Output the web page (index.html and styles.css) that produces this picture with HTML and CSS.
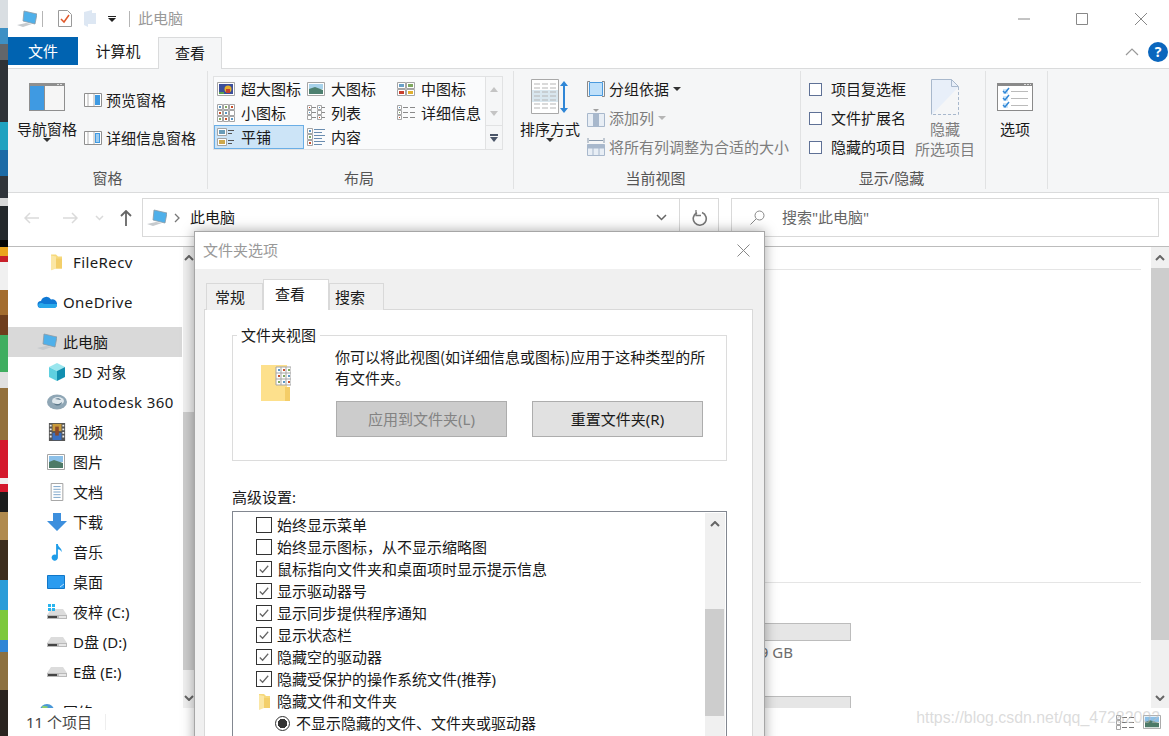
FILE: index.html
```html
<!DOCTYPE html>
<html lang="zh-CN">
<head>
  <meta charset="UTF-8">
  <title>此电脑</title>
  <link rel="stylesheet" href="styles.css">
</head>
<body>
  <!-- shared icons -->
  <svg class="defs" aria-hidden="true">
    <symbol id="pc" viewBox="0 0 20 18"><path d="M7 1l13 3-2 10-12-3z" fill="#4fb0ea" stroke="#8d9ba5" stroke-width=".8"/><path d="M0 15l9-2 6 1-9 3z" fill="#c6cacd"/></symbol>
    <symbol id="folder" viewBox="0 0 13 17"><path d="M1 1h5l2 2h4v12H1z" fill="#f6d97c"/><path d="M1 2v15l5-2V3z" fill="#fbe7a5"/><path d="M6 5h6v10H6z" fill="#f3cf6a"/></symbol>
    <symbol id="drive" viewBox="0 0 20 12"><path d="M4 1h12l4 6H0z" fill="#dcdcdc"/><path d="M0 7h20v4H0z" fill="#b9b9b9"/><path d="M1 8h9v2H1z" fill="#444"/><path d="M12 8h7v2h-7z" fill="#e6e6e6"/></symbol>
    <symbol id="chev-up" viewBox="0 0 10 6"><path d="M1 5l4-4 4 4" fill="none" stroke="#666" stroke-width="2"/></symbol>
    <symbol id="chev-down" viewBox="0 0 10 6"><path d="M1 1l4 4 4-4" fill="none" stroke="#666" stroke-width="2"/></symbol>
    <symbol id="tick" viewBox="0 0 15 15"><path d="M3 8l3 3 6-7" fill="none" stroke="#666" stroke-width="1.3"/></symbol>
    <symbol id="mini" viewBox="0 0 18 16"><path d="M.5.5h17v15H.5z" fill="#fff" stroke="#a5a5a5"/><path d="M2 2h14v6H2z" fill="#8cc0e8"/><path d="M2 8l5-2 9 3v5H2z" fill="#4d7a68"/></symbol>
  </svg>

  <div class="desktop">
    <div class="wallpaper-strip"></div>

    <div class="explorer">
      <header class="titlebar">
        <svg class="ico-pc"><use href="#pc"/></svg>
        <span class="tb-sep"></span>
        <svg class="tb-doc" viewBox="0 0 14 17"><path d="M.5.5h9l4 4v12H.5z" fill="#fff" stroke="#9a9a9a"/><path d="M3 9l3 3 5-7" fill="none" stroke="#e0582a" stroke-width="1.5"/></svg>
        <svg class="tb-folder" viewBox="0 0 12 17"><path d="M0 2l8-2v3h4v11H4v3l-4-2z" fill="#dde7f3"/></svg>
        <svg class="tb-drop" viewBox="0 0 8 6"><path d="M0 0h8v1H0zM0 2h8L4 6z" fill="#222"/></svg>
        <span class="tb-sep tb-sep-title"></span>
        <span class="tb-title">此电脑</span>
        <div class="win-buttons">
          <svg viewBox="0 0 12 12"><path d="M0 6h12" stroke="#888" fill="none"/></svg>
          <svg viewBox="0 0 12 12"><path d="M.5.5h11v11H.5z" stroke="#888" fill="none"/></svg>
          <svg viewBox="0 0 12 12"><path d="M0 0l12 12M12 0L0 12" stroke="#888" fill="none"/></svg>
        </div>
      </header>

      <nav class="tabs">
        <a class="tab tab-file">文件</a>
        <a class="tab tab-plain">计算机</a>
        <a class="tab tab-active">查看</a>
        <svg class="ribbon-toggle" viewBox="0 0 14 8"><path d="M1 7l6-6 6 6" fill="none" stroke="#999" stroke-width="1.2"/></svg>
        <span class="help">?</span>
      </nav>

      <section class="ribbon">
        <div class="group group-panes">
          <div class="group-body">
            <div class="large">
              <div class="large-icon">
                <svg width="36" height="28" viewBox="0 0 36 28"><path d="M0 0h36v28H0z" fill="#8f8f8f"/><path d="M1 3h14v24H1z" fill="#3f9ae2"/><path d="M16 3h19v24H16z" fill="#f6f6f6"/><path d="M28 1h2v1h-2zM31 1h2v1h-2z" fill="#ddd"/></svg>
              </div>
              <span class="large-label">导航窗格</span>
              <span class="caret"></span>
            </div>
            <div class="pane-col">
              <div class="row">
                <svg class="row-icon" viewBox="0 0 18 14"><path d="M.5.5h17v13H.5z" fill="#fff" stroke="#8f8f8f"/><path d="M4 1v12M10 1v12" stroke="#b5b5b5"/><path d="M11 2h5v10h-5z" fill="#3f9ae2"/></svg>
                <span>预览窗格</span>
              </div>
              <div class="row">
                <svg class="row-icon" viewBox="0 0 18 14"><path d="M.5.5h17v13H.5z" fill="#fff" stroke="#8f8f8f"/><path d="M4 1v12M10 1v12" stroke="#b5b5b5"/><path d="M11 2h5v10h-5z" fill="#3f9ae2"/><path d="M12 4h3M12 6h3M12 8h3M12 10h3" stroke="#fff"/></svg>
                <span>详细信息窗格</span>
              </div>
            </div>
          </div>
          <div class="group-label">窗格</div>
        </div>

        <div class="group group-layout">
          <div class="group-body">
            <div class="gallery">
              <div class="gallery-item">
                <svg class="row-icon" viewBox="0 0 18 14"><path d="M.5.5h17v13H.5z" fill="#fff" stroke="#a5a5a5"/><path d="M2 2h14v10H2z" fill="#3c4f9a"/><circle cx="11" cy="7" r="3.5" fill="#e8b02c"/><path d="M9 7h4v4H9z" fill="#c8402e"/><path d="M2 10h5v2H2z" fill="#5aa050"/></svg>
                <span>超大图标</span>
              </div>
              <div class="gallery-item">
                <svg class="row-icon" viewBox="0 0 18 14"><path d="M.5.5h17v13H.5z" fill="#fff" stroke="#a5a5a5"/><path d="M2 2h14v5H2z" fill="#a7d2ea"/><path d="M2 7l6-2 8 3v4H2z" fill="#4d8070"/></svg>
                <span>大图标</span>
              </div>
              <div class="gallery-item">
                <svg class="row-icon" viewBox="0 0 18 14"><path d="M.5.5h8v6h-8zM9.5.5h8v6h-8zM.5 7.5h8v6h-8zM9.5 7.5h8v6h-8z" fill="#fff" stroke="#a5a5a5"/><path d="M2 2h5v3H2z" fill="#6aa0c8"/><path d="M11 2h5v3h-5z" fill="#7fa860"/><path d="M2 9h5v3H2z" fill="#c8402e"/><path d="M11 9h5v3h-5z" fill="#e0b030"/></svg>
                <span>中图标</span>
              </div>
              <div class="gallery-item">
                <svg class="row-icon row-icon-tall" viewBox="0 0 18 18"><path d="M.5.5h5v5h-5zM6.5.5h5v5h-5zM12.5.5h5v5h-5zM.5 6.5h5v5h-5zM6.5 6.5h5v5h-5zM12.5 6.5h5v5h-5zM.5 12.5h5v5h-5zM6.5 12.5h5v5h-5zM12.5 12.5h5v5h-5z" fill="#fff" stroke="#a5a5a5"/><path d="M2 2h2v2H2zM8 8h2v2H8zM14 14h2v2h-2z" fill="#5a96c4"/><path d="M8 2h2v2H8zM2 14h2v2H2z" fill="#7fa860"/><path d="M14 2h2v2h-2zM8 14h2v2H8zM2 8h2v2H2z" fill="#c8502e"/></svg>
                <span>小图标</span>
              </div>
              <div class="gallery-item">
                <svg class="row-icon row-icon-tall" viewBox="0 0 18 16"><path d="M.5.5h4v4h-4zM.5 5.5h4v4h-4zM.5 10.5h4v4h-4zM10.5.5h4v4h-4zM10.5 5.5h4v4h-4zM10.5 10.5h4v4h-4z" fill="#fff" stroke="#a5a5a5"/><path d="M5 2.5h4M5 7.5h4M5 12.5h4M15 2.5h3M15 7.5h3M15 12.5h3" stroke="#8a8a8a"/><path d="M2 2h1v1H2zM12 12h1v1h-1z" fill="#c8502e"/><path d="M2 7h1v1H2zM12 2h1v1h-1z" fill="#5a96c4"/></svg>
                <span>列表</span>
              </div>
              <div class="gallery-item">
                <svg class="row-icon row-icon-tall" viewBox="0 0 18 16"><path d="M.5.5h4v4h-4zM.5 5.5h4v4h-4zM.5 10.5h4v4h-4z" fill="#fff" stroke="#a5a5a5"/><path d="M6 2.5h5M13 2.5h5M6 7.5h5M13 7.5h5M6 12.5h5M13 12.5h5" stroke="#8a8a8a"/><path d="M2 2h1v1H2z" fill="#5a96c4"/><path d="M2 7h1v1H2z" fill="#7fa860"/><path d="M2 12h1v1H2z" fill="#c8502e"/></svg>
                <span>详细信息</span>
              </div>
              <div class="gallery-item gallery-selected">
                <svg class="row-icon row-icon-tall" viewBox="0 0 18 18"><path d="M.5.5h9v7h-9zM.5 10.5h9v7h-9z" fill="#fff" stroke="#a5a5a5"/><path d="M2 2h6v4H2z" fill="#6a9cb8"/><path d="M2 12h6v4H2z" fill="#cfa84a"/><path d="M11 2.5h6M11 5.5h4M11 12.5h6M11 15.5h4" stroke="#555"/></svg>
                <span>平铺</span>
              </div>
              <div class="gallery-item">
                <svg class="row-icon row-icon-tall" viewBox="0 0 18 18"><path d="M.5.5h5v5h-5zM.5 6.5h5v5h-5zM.5 12.5h5v5h-5z" fill="#fff" stroke="#a5a5a5"/><path d="M7 1.5h11M7 4.5h8M7 7.5h11M7 10.5h8M7 13.5h11M7 16.5h8" stroke="#6a8db0"/><path d="M2 2h2v2H2z" fill="#5a96c4"/><path d="M2 8h2v2H2z" fill="#7fa860"/><path d="M2 14h2v2H2z" fill="#c8502e"/></svg>
                <span>内容</span>
              </div>
            </div>
            <div class="gallery-scroll">
              <div class="gs-top">
                <span class="tri-up"></span>
                <span class="tri-down"></span>
              </div>
              <div class="gs-more">
                <span class="gs-bar"></span>
                <span class="tri-down tri-dark"></span>
              </div>
            </div>
          </div>
          <div class="group-label">布局</div>
        </div>

        <div class="group group-view">
          <div class="group-body">
            <div class="large">
              <div class="large-icon">
                <svg width="38" height="36" viewBox="0 0 38 36"><path d="M.5.5h27v34H.5z" fill="#fff" stroke="#a9a9a9"/><path d="M1 11h26v12H1z" fill="#d9e7ef"/><path d="M3 5h6M11 5h6M19 5h6M3 9h6M11 9h6M19 9h6M3 13h6M11 13h6M19 13h6M3 17h6M11 17h6M19 17h6M3 21h6M11 21h6M19 21h6M3 25h6M11 25h6M19 25h6M3 29h6M11 29h6M19 29h6" stroke="#b5b5b5"/><path d="M33 2l-4 5h3v22h-3l4 5 4-5h-3V7h3z" fill="#2f86d6"/></svg>
              </div>
              <span class="large-label">排序方式</span>
              <span class="caret"></span>
            </div>
            <div class="option-col">
              <div class="row">
                <svg class="row-icon row-icon-tall" viewBox="0 0 18 16"><path d="M3 .5H.5v15H3M15 .5h2.500v15H15" fill="none" stroke="#8a8a8a"/><path d="M2.500 1.500h13v13h-13z" fill="#bfe0fa" stroke="#4a9ade"/></svg>
                <span>分组依据</span>
                <span class="caret caret-side"></span>
              </div>
              <div class="row row-off">
                <svg class="row-icon row-icon-tall" viewBox="0 0 18 18"><path d="M.5 4.500h17v13H.5z" fill="#e8eef5" stroke="#a8b8cc"/><path d="M6 5h6v12H6z" fill="#a8b8cc"/><path d="M6 0h6l-3 3z" fill="#a0a0a0"/></svg>
                <span>添加列</span>
                <span class="caret caret-side caret-off"></span>
              </div>
              <div class="row row-off">
                <svg class="row-icon row-icon-tall" viewBox="0 0 18 18"><path d="M.5 6.500h17v11H.5z" fill="#e8eef5" stroke="#a8b8cc"/><path d="M.5 6.500h17v4H.5z" fill="#a8b8cc"/><path d="M6 10v8M12 10v8" stroke="#a8b8cc"/><path d="M1 0v5M17 0v5M2 2.500h14" stroke="#8a9aac"/></svg>
                <span>将所有列调整为合适的大小</span>
              </div>
            </div>
          </div>
          <div class="group-label">当前视图</div>
        </div>

        <div class="group group-show">
          <div class="group-body">
            <div class="option-col show-col">
              <label class="row"><span class="rb-check"></span><span>项目复选框</span></label>
              <label class="row"><span class="rb-check"></span><span>文件扩展名</span></label>
              <label class="row"><span class="rb-check"></span><span>隐藏的项目</span></label>
            </div>
            <div class="large large-off">
              <div class="large-icon">
                <svg width="28" height="36" viewBox="0 0 28 36"><path d="M.5.500h20l7 7v28H.5z" fill="#e8eff9"/><path d="M.5 35.500V.500h20l7 7M20.500.500v7h7" fill="none" stroke="#a8b8cc"/><path d="M27.500 8v27.500H1z" fill="#f5f6f7"/><path d="M27.500 8v27.500H1" fill="none" stroke="#a8b8cc" stroke-dasharray="3 2"/></svg>
              </div>
              <span class="large-label">隐藏</span>
              <span class="large-label">所选项目</span>
            </div>
          </div>
          <div class="group-label">显示/隐藏</div>
        </div>

        <div class="group group-options">
          <div class="group-body">
            <div class="large">
              <div class="large-icon">
                <svg width="36" height="28" viewBox="0 0 36 28"><path d="M0 0h36v28H0z" fill="#8a8a8a"/><path d="M1 3h34v24H1z" fill="#fff"/><path d="M27 1h2v1h-2zM30 1h2v1h-2zM33 1h1v1h-1z" fill="#ddd"/><path d="M6 6h5v5H6zM6 13h5v5H6zM6 20h5v5H6z" fill="#cfe6f8"/><path d="M6 8l2 2 4-5M6 15l2 2 4-5M6 22l2 2 4-5" fill="none" stroke="#2f86d6" stroke-width="1.5"/><path d="M14 8.500h17M14 15.500h17M14 22.500h17" stroke="#bbb"/></svg>
              </div>
              <span class="large-label">选项</span>
            </div>
          </div>
        </div>
      </section>

      <div class="addressbar">
        <svg class="nav-back" viewBox="0 0 15 12"><path d="M15 6H1M6 1L1 6l5 5" fill="none" stroke="#dadada" stroke-width="1.5"/></svg>
        <svg class="nav-forward" viewBox="0 0 15 12"><path d="M0 6h14M9 1l5 5-5 5" fill="none" stroke="#dadada" stroke-width="1.5"/></svg>
        <svg class="nav-recent" viewBox="0 0 9 6"><path d="M1 1l3.500 3.500L8 1" fill="none" stroke="#dadada" stroke-width="1.5"/></svg>
        <svg class="nav-up" viewBox="0 0 12 16"><path d="M6 16V1M1 6l5-5 5 5" fill="none" stroke="#666" stroke-width="1.8"/></svg>
        <div class="address">
          <svg class="ico-pc"><use href="#pc"/></svg>
          <svg class="crumb" viewBox="0 0 6 10"><path d="M1 1l4 4-4 4" fill="none" stroke="#777" stroke-width="1.3"/></svg>
          <span class="crumb-text">此电脑</span>
          <svg class="addr-drop" viewBox="0 0 11 7"><path d="M1 1l4.500 4.500L10 1" fill="none" stroke="#666" stroke-width="1.5"/></svg>
          <div class="refresh">
            <svg viewBox="0 0 16 16"><path d="M10 2.600A6.500 6.500 0 1 1 5 2.800" fill="none" stroke="#777" stroke-width="1.6"/><path d="M4 0v5.500h5" fill="none" stroke="#777" stroke-width="1.3"/></svg>
          </div>
        </div>
        <div class="search">
          <svg viewBox="0 0 15 15"><circle cx="9.500" cy="5.500" r="4.500" fill="none" stroke="#888"/><path d="M6 9l-5.500 5.500" stroke="#888"/></svg>
          <span>搜索&quot;此电脑&quot;</span>
        </div>
      </div>

      <div class="main">
        <aside class="nav-pane">
          <ul class="tree">
            <li class="tree-item child latin">
              <svg class="tree-icon" viewBox="0 0 20 17"><use href="#folder" x="3" width="13" height="17"/></svg>FileRecv
            </li>
            <li class="tree-item top spaced latin">
              <svg class="tree-icon" viewBox="0 0 20 14"><path d="M4 13a3.500 3.500 0 0 1 0-7 5.500 5.500 0 0 1 10-1.500A4.500 4.500 0 0 1 20 9a4 4 0 0 1-3 4z" fill="#0f78d4"/><path d="M4 13h13a3 3 0 0 0 3-4H7a4 4 0 0 0-6 1 3.500 3.500 0 0 0 3 3z" fill="#28a8ea"/></svg>OneDrive
            </li>
            <li class="tree-item top spaced selected">
              <svg class="tree-icon"><use href="#pc"/></svg>此电脑
            </li>
            <li class="tree-item child">
              <svg class="tree-icon" viewBox="0 0 20 18"><path d="M10 0l8 4-8 4-8-4z" fill="#9ae6ee"/><path d="M2 4l8 4v10l-8-4z" fill="#5fd0e0"/><path d="M18 4l-8 4v10l8-4z" fill="#128fb0"/></svg>3D 对象
            </li>
            <li class="tree-item child latin">
              <svg class="tree-icon" viewBox="0 0 20 16"><ellipse cx="10" cy="8" rx="10" ry="7.500" fill="#8fa6b5"/><ellipse cx="11" cy="7" rx="6" ry="4" fill="#dfe7ec"/><path d="M6 9c3 4 9 3 9-1-2 2-5 3-9 1zM8 5c2-1 5-1 6 1-2-.5-4-.5-6-1z" fill="#5f7a8c"/></svg>Autodesk 360
            </li>
            <li class="tree-item child">
              <svg class="tree-icon" viewBox="0 0 20 20"><path d="M1 0h18v20H1z" fill="#555"/><path d="M5 1h10v8H5z" fill="#c99a3a"/><path d="M5 11h10v8H5z" fill="#3a6fc0"/><path d="M8 4h4v10H8z" fill="#8a4a2a"/><path d="M2 2h2v2H2zM2 6h2v2H2zM2 10h2v2H2zM2 14h2v2H2zM16 2h2v2h-2zM16 6h2v2h-2zM16 10h2v2h-2zM16 14h2v2h-2z" fill="#eee"/></svg>视频
            </li>
            <li class="tree-item child">
              <svg class="tree-icon" viewBox="0 0 20 16"><use href="#mini" width="18" height="16"/></svg>图片
            </li>
            <li class="tree-item child">
              <svg class="tree-icon" viewBox="0 0 20 20"><path d="M3.500.5h13v19h-13z" fill="#fff" stroke="#9a9a9a"/><path d="M6 4h8M6 7h8M6 10h8M6 13h8M6 16h8" stroke="#6f9cc4"/></svg>文档
            </li>
            <li class="tree-item child">
              <svg class="tree-icon" viewBox="0 0 20 18"><path d="M6 0h8v8h6L10 18 0 8h6z" fill="#3d8fdd"/></svg>下载
            </li>
            <li class="tree-item child">
              <svg class="tree-icon" viewBox="0 0 20 20"><path d="M9 1h2c0 4 5 4 4 9-1-2-2-3-4-3v9a3.500 3.500 0 1 1-2-3z" fill="#1e9ce8"/></svg>音乐
            </li>
            <li class="tree-item child">
              <svg class="tree-icon" viewBox="0 0 20 14"><path d="M.5.500h17v13H.5z" fill="#2b9cf0" stroke="#1177c8"/><path d="M13 12l4-3" stroke="#bde0fa"/></svg>桌面
            </li>
            <li class="tree-item child">
              <svg class="tree-icon" viewBox="0 0 20 16"><use href="#drive" y="4" width="20" height="12"/><path d="M1 0h3v3H1zM5 0h3v3H5zM1 4h3v3H1zM5 4h3v3H5z" fill="#27b4ee"/></svg>夜梓 (C:)
            </li>
            <li class="tree-item child">
              <svg class="tree-icon" viewBox="0 0 20 12"><use href="#drive"/></svg>D盘 (D:)
            </li>
            <li class="tree-item child">
              <svg class="tree-icon" viewBox="0 0 20 12"><use href="#drive"/></svg>E盘 (E:)
            </li>
            <li class="tree-item top spaced">
              <svg class="tree-icon" viewBox="0 0 20 20"><circle cx="10" cy="9" r="8" fill="#4a98d8"/><path d="M5 3l6 1-2 5-5-1z" fill="#8ccf70"/></svg>网络
            </li>
          </ul>
        </aside>
        <div class="scrollbar nav-scroll">
          <div class="sb-arrow"><svg><use href="#chev-up"/></svg></div>
          <div class="nav-scroll-track"></div>
          <div class="sb-thumb nav-scroll-thumb"></div>
          <div class="sb-track"></div>
          <div class="sb-arrow"><svg><use href="#chev-down"/></svg></div>
        </div>

        <div class="content">
          <div class="content-head"></div>
          <div class="folders-section"></div>
          <div class="drives">
            <div class="drive-bar"></div>
            <div class="drive-caption">119 GB</div>
            <div class="drive-bar drive-bar-next"></div>
          </div>
        </div>
        <div class="scrollbar content-scroll">
          <div class="sb-arrow"><svg><use href="#chev-up"/></svg></div>
          <div class="sb-thumb content-scroll-thumb"></div>
          <div class="sb-track"></div>
          <div class="sb-arrow"><svg><use href="#chev-down"/></svg></div>
        </div>
      </div>

      <footer class="statusbar">
        <span class="status-text">11 个项目</span>
        <span class="status-sep"></span>
        <div class="view-toggle">
          <svg width="20" height="15" viewBox="0 0 18 15"><path d="M.5.500h4v4h-4zM.5 5.500h4v4h-4zM.5 10.500h4v4h-4z" fill="#fff" stroke="#a5a5a5"/><path d="M6 2.500h5M13 2.500h5M6 7.500h5M13 7.500h5M6 12.500h5M13 12.500h5" stroke="#777"/></svg>
          <svg width="18" height="14" viewBox="0 0 18 16" preserveAspectRatio="none"><use href="#mini"/></svg>
        </div>
      </footer>
    </div>

    <!-- Folder options dialog, floats above the explorer window -->
    <div class="dialog">
      <div class="dialog-title">
        <span>文件夹选项</span>
        <svg viewBox="0 0 13 13"><path d="M.5.500l12 12M12.500.500l-12 12" stroke="#888" fill="none"/></svg>
      </div>
      <div class="dialog-body">
        <div class="dialog-tabs">
          <span class="dtab dtab-general">常规</span>
          <span class="dtab dtab-active">查看</span>
          <span class="dtab dtab-search">搜索</span>
        </div>
        <div class="dialog-panel">
          <fieldset class="folder-views">
            <legend>文件夹视图</legend>
            <div class="fv-icon">
              <svg width="30" height="37" viewBox="0 0 30 37"><path d="M0 1h26v36H0z" fill="#fde08c"/><path d="M24 23h5v14h-5z" fill="#f4cd68"/><path d="M15 3h15v18H15z" fill="#fff" stroke="#a5a5a5"/><path d="M15 9h15M15 15h15M20 3v18M25 3v18" stroke="#a5a5a5"/><path d="M17 5h2v2h-2zM27 11h2v2h-2zM22 17h2v2h-2z" fill="#5a96c4"/><path d="M22 5h2v2h-2zM17 11h2v2h-2zM27 17h2v2h-2z" fill="#c8502e"/><path d="M27 5h2v2h-2zM22 11h2v2h-2zM17 17h2v2h-2z" fill="#7fa860"/></svg>
            </div>
            <div class="fv-right">
              <p class="fv-text">你可以将此视图(如详细信息或图标)应用于这种类型的所有文件夹。</p>
              <div class="fv-buttons">
                <button class="btn btn-off" disabled>应用到文件夹(L)</button>
                <button class="btn">重置文件夹(R)</button>
              </div>
            </div>
          </fieldset>

          <div class="advanced-label">高级设置:</div>
          <div class="advanced-list">
            <ul class="settings">
              <li class="setting"><span class="box"></span>始终显示菜单</li>
              <li class="setting"><span class="box"></span>始终显示图标，从不显示缩略图</li>
              <li class="setting"><span class="box"><svg><use href="#tick"/></svg></span>鼠标指向文件夹和桌面项时显示提示信息</li>
              <li class="setting"><span class="box"><svg><use href="#tick"/></svg></span>显示驱动器号</li>
              <li class="setting"><span class="box"><svg><use href="#tick"/></svg></span>显示同步提供程序通知</li>
              <li class="setting"><span class="box"><svg><use href="#tick"/></svg></span>显示状态栏</li>
              <li class="setting"><span class="box"><svg><use href="#tick"/></svg></span>隐藏空的驱动器</li>
              <li class="setting"><span class="box"><svg><use href="#tick"/></svg></span>隐藏受保护的操作系统文件(推荐)</li>
              <li class="setting"><svg class="setting-folder"><use href="#folder"/></svg>隐藏文件和文件夹</li>
              <li class="setting setting-radio"><span class="radio"></span>不显示隐藏的文件、文件夹或驱动器</li>
            </ul>
            <div class="scrollbar list-scroll">
              <div class="sb-arrow"><svg><use href="#chev-up"/></svg></div>
              <div class="list-scroll-track"></div>
              <div class="sb-thumb list-scroll-thumb"></div>
              <div class="sb-track"></div>
            </div>
          </div>
        </div>
      </div>
    </div>

    <div class="watermark">https://blog.csdn.net/qq_47282002</div>
  </div>
</body>
</html>
```

FILE: styles.css
```css
/* General Styles */
html, body {
  margin: 0;
  height: 100%;
  overflow: hidden;
}

body {
  font-family: "Noto Sans", "Noto Sans CJK SC", sans-serif;
  font-size: 15px;
  line-height: 20px;
  color: #1a1a1a;
  background-color: #fff;
}

ul {
  list-style: none;
  margin: 0;
  padding: 0;
}

svg {
  display: block;
  flex: none;
}

.defs {
  width: 0;
  height: 0;
  position: absolute;
}

.desktop {
  position: relative;
  display: flex;
  width: 1169px;
  height: 736px;
  overflow: hidden;
}

.wallpaper-strip {
  width: 8px;
  flex: none;
  background: linear-gradient(180deg,
    #d9dee2 0 28px, #3d90c4 28px 44px, #62666a 44px 60px, #2e3237 60px 122px,
    #1fa2c0 122px 150px, #1b6aa6 150px 176px, #30343a 176px 198px, #d8d8d8 198px 206px,
    #24282c 206px 240px, #050505 240px 247px, #eaa41e 247px 256px, #c8202a 256px 262px,
    #f0f0f0 262px 290px, #a36c2e 290px 315px, #6e3d1c 315px 335px, #3fae60 335px 372px,
    #e0e0e0 372px 388px, #93703c 388px 440px, #d4182c 440px 478px, #f0f0f0 478px 484px,
    #d4182c 484px 492px, #1c1c1c 492px 512px, #b08a4e 512px 540px, #3c2d1e 540px 580px,
    #2a9cd8 580px 610px, #7cc83c 610px 640px, #2f86d6 640px 652px, #8c7040 652px 690px,
    #2a2420 690px 736px);
}

.explorer {
  flex: 1;
  display: flex;
  flex-direction: column;
  min-width: 0;
  background-color: #fff;
}

/* Title bar */
.titlebar {
  height: 37px;
  flex: none;
  display: flex;
  align-items: center;
  padding-left: 9px;
}

.ico-pc {
  width: 20px;
  height: 18px;
}

.tb-sep {
  width: 1px;
  height: 16px;
  margin-left: 5px;
  background-color: #b5b5b5;
}

.tb-doc {
  width: 14px;
  height: 17px;
  margin-left: 15px;
}

.tb-folder {
  width: 12px;
  height: 17px;
  margin-left: 12px;
}

.tb-drop {
  width: 8px;
  height: 6px;
  margin-left: 12px;
}

.tb-sep-title {
  margin-left: 13px;
}

.tb-title {
  margin: 0 0 2px 8px;
  color: #999;
}

.win-buttons {
  margin-left: auto;
  margin-right: 22px;
  display: flex;
  gap: 46px;
}

.win-buttons svg {
  width: 12px;
  height: 12px;
}

.win-buttons svg:last-child {
  margin-left: 1px;
}

/* Ribbon tabs */
.tabs {
  height: 32px;
  flex: none;
  box-sizing: border-box;
  display: flex;
  align-items: flex-start;
  border-bottom: 1px solid #dadbdc;
}

.tab {
  height: 28px;
  line-height: 29px;
  text-align: center;
}

.tab-file {
  width: 70px;
  background-color: #0063b1;
  color: #fff;
}

.tab-plain {
  width: 80px;
}

.tab-active {
  width: 64px;
  height: 32px;
  line-height: 30px;
  box-sizing: border-box;
  background-color: #f5f6f7;
  border: 1px solid #dadbdc;
  border-bottom: none;
}

.ribbon-toggle {
  width: 14px;
  height: 8px;
  margin: 11px 0 0 auto;
}

.help {
  width: 20px;
  height: 20px;
  margin: 5px 1px 0 9px;
  border-radius: 50%;
  background-color: #0a66bd;
  color: #fff;
  font-weight: 700;
  font-size: 14px;
  text-align: center;
}

/* Ribbon */
.ribbon {
  height: 124px;
  flex: none;
  box-sizing: border-box;
  display: flex;
  align-items: flex-start;
  padding-top: 2px;
  background-color: #f5f6f7;
  border-bottom: 1px solid #dadbdc;
}

.group {
  height: 118px;
  box-sizing: border-box;
  display: flex;
  flex-direction: column;
  border-right: 1px solid #e1e2e3;
}

.group-panes { width: 200px; }
.group-layout { width: 306px; }
.group-view { width: 287px; }
.group-show { width: 185px; }
.group-options { width: 62px; }

.group-body {
  height: 97px;
  display: flex;
}

.group-label {
  height: 21px;
  line-height: 21px;
  padding-right: 3px;
  text-align: center;
  color: #555;
}

.group-panes .group-label {
  padding-right: 0;
}

.large {
  width: 60px;
  flex: none;
  display: flex;
  flex-direction: column;
  align-items: center;
  padding-top: 7px;
}

.large-icon {
  height: 38px;
  display: flex;
  align-items: center;
  justify-content: center;
  margin-bottom: 3px;
}

.large-label {
  white-space: nowrap;
}

.large-off .large-label {
  color: #7d7d7d;
}

.caret {
  width: 0;
  height: 0;
  margin-top: -1px;
  border-left: 4px solid transparent;
  border-right: 4px solid transparent;
  border-top: 4px solid #333;
}

.row {
  height: 24px;
  display: flex;
  align-items: center;
  white-space: nowrap;
}

.row > span {
  margin-bottom: 1px;
}

.row > .rb-check {
  margin-bottom: 0;
}

.row > .caret-side {
  margin-top: 0;
  margin-left: 4px;
}

.caret-off {
  border-top-color: #b5b5b5;
}

.row-icon {
  width: 18px;
  height: 14px;
  margin-right: 4px;
}

.row-icon-tall {
  height: 18px;
}

.row-off {
  color: #7d7d7d;
}

.group-panes .large {
  margin-left: 9px;
}

.pane-col {
  margin-left: 7px;
  padding-top: 17px;
  display: flex;
  flex-direction: column;
  gap: 14px;
}

.group-layout .group-body {
  padding: 5px 0 0 5px;
}

.gallery {
  width: 273px;
  height: 74px;
  box-sizing: border-box;
  display: grid;
  grid-template-columns: repeat(3, 90px);
  grid-auto-rows: 24px;
  background-color: #fafbfc;
  border: 1px solid #e1e2e3;
}

.gallery-item {
  display: flex;
  align-items: center;
  box-sizing: border-box;
  padding-left: 3px;
  white-space: nowrap;
}

.gallery-item span {
  margin-bottom: 1px;
}

.gallery-item .row-icon {
  margin-right: 6px;
}

.gallery-selected {
  background-color: #cce4f7;
  box-shadow: inset 0 0 0 1px #6aaee6;
}

.gallery-scroll {
  width: 17px;
  height: 74px;
  display: flex;
  flex-direction: column;
  box-sizing: border-box;
  border: 1px solid #e1e2e3;
  border-left: none;
}

.gs-top {
  height: 49px;
  display: flex;
  flex-direction: column;
  align-items: center;
  gap: 19px;
  padding-top: 10px;
  box-sizing: border-box;
}

.gs-more {
  height: 23px;
  display: flex;
  flex-direction: column;
  align-items: center;
  justify-content: center;
  gap: 1px;
  border-top: 1px solid #e1e2e3;
}

.gs-bar {
  width: 8px;
  height: 2px;
  background-color: #4a5568;
}

.tri-up,
.tri-down {
  width: 0;
  height: 0;
  border-left: 4px solid transparent;
  border-right: 4px solid transparent;
}

.tri-up {
  border-bottom: 5px solid #c4c4c4;
}

.tri-down {
  border-top: 5px solid #c4c4c4;
}

.tri-dark {
  border-top-color: #4a5568;
}

.group-view .large {
  margin-left: 6px;
}

.option-col {
  margin-left: 7px;
  padding-top: 6px;
  display: flex;
  flex-direction: column;
  gap: 5px;
}

.show-col {
  margin-left: 8px;
  width: 97px;
}

.rb-check {
  width: 13px;
  height: 13px;
  margin-right: 9px;
  box-sizing: border-box;
  background-color: #fff;
  border: 1px solid #5f7196;
}

.group-show .large {
  margin-left: 9px;
}

.group-options .large {
  margin-left: -1px;
}

/* Address bar */
.addressbar {
  height: 54px;
  flex: none;
  box-sizing: border-box;
  display: flex;
  align-items: flex-start;
  padding: 5px 0 0 16px;
  border-bottom: 1px solid #bcbcbc;
}

.nav-back,
.nav-forward {
  width: 15px;
  height: 12px;
  margin-top: 14px;
}

.nav-forward {
  margin-left: 24px;
}

.nav-recent {
  width: 9px;
  height: 6px;
  margin: 17px 0 0 17px;
}

.nav-up {
  width: 12px;
  height: 16px;
  margin: 12px 0 0 16px;
}

.address {
  width: 577px;
  height: 39px;
  box-sizing: border-box;
  margin-left: 10px;
  padding-left: 4px;
  display: flex;
  align-items: center;
  border: 1px solid #d9d9d9;
}

.crumb {
  width: 6px;
  height: 10px;
  margin-left: 7px;
}

.crumb-text {
  margin: 0 0 2px 10px;
}

.addr-drop {
  width: 11px;
  height: 7px;
  margin-left: auto;
  margin-right: 12px;
}

.refresh {
  width: 39px;
  height: 100%;
  box-sizing: border-box;
  padding-left: 2px;
  display: flex;
  align-items: center;
  justify-content: center;
  border-left: 1px solid #d9d9d9;
}

.refresh svg {
  width: 16px;
  height: 16px;
}

.search {
  width: 428px;
  height: 39px;
  box-sizing: border-box;
  margin-left: 12px;
  padding-left: 18px;
  display: flex;
  align-items: center;
  gap: 17px;
  color: #666;
  border: 1px solid #d9d9d9;
}

.search span {
  margin-bottom: 2px;
}

.search svg {
  width: 15px;
  height: 15px;
}

/* Navigation tree and content */
.main {
  flex: 1;
  min-height: 0;
  display: flex;
  overflow: hidden;
}

.nav-pane {
  width: 175px;
  flex: none;
  overflow: hidden;
}

.tree-item {
  height: 30px;
  display: flex;
  align-items: center;
  gap: 6px;
  white-space: nowrap;
}

.tree-item.child {
  padding-left: 39px;
}

.tree-item.top {
  padding-left: 29px;
}

.tree-item.spaced {
  margin-top: 10px;
}

.tree-item.latin {
  letter-spacing: 0.4px;
}

.tree-item.selected {
  margin-right: 1px;
  background-color: #d9d9d9;
}

.tree-icon {
  width: 20px;
  height: 18px;
}

.scrollbar {
  flex: none;
  display: flex;
  flex-direction: column;
  background-color: #f0f0f0;
}

.sb-arrow {
  height: 21px;
  flex: none;
  display: flex;
  align-items: center;
  justify-content: center;
}

.sb-arrow svg {
  width: 10px;
  height: 6px;
}

.sb-thumb {
  flex: none;
  background-color: #cdcdcd;
}

.sb-track {
  flex: 1;
}

.nav-scroll {
  width: 11px;
}

.nav-scroll-track {
  height: 144px;
}

.nav-scroll-thumb {
  height: 258px;
}

.content {
  flex: 1;
  min-width: 0;
  padding-right: 10px;
}

.content-head {
  height: 22px;
  border-bottom: 1px solid #e5e5e5;
}

.folders-section {
  height: 312px;
  border-bottom: 1px solid #e5e5e5;
}

.drives {
  width: 157px;
  margin-left: 500px;
  padding-top: 40px;
}

.drive-bar {
  height: 18px;
  box-sizing: border-box;
  background-color: #e6e6e6;
  border: 1px solid #bcbcbc;
}

.drive-bar-next {
  margin-top: 34px;
}

.drive-caption {
  margin-top: 1px;
  padding-right: 58px;
  text-align: right;
  white-space: nowrap;
  color: #6d6d6d;
}

.content-scroll {
  width: 18px;
}

.content-scroll-thumb {
  height: 372px;
}

.statusbar {
  height: 28px;
  flex: none;
  display: flex;
  align-items: center;
  padding-left: 18px;
  color: #444;
}

.status-sep {
  width: 1px;
  height: 16px;
  margin-left: 13px;
  background-color: #eee;
}

.view-toggle {
  margin-left: auto;
  margin-right: 8px;
  display: flex;
  align-items: center;
  gap: 8px;
}

/* Folder options dialog */
.dialog {
  position: absolute;
  left: 194px;
  top: 231px;
  width: 571px;
  height: 540px;
  box-sizing: border-box;
  background-color: #f0f0f0;
  border: 1px solid #a6a6a6;
  box-shadow: 0 0 12px rgba(0, 0, 0, 0.35);
}

.dialog-title {
  height: 37px;
  display: flex;
  align-items: center;
  justify-content: space-between;
  padding: 0 14px 0 8px;
  background-color: #fff;
  color: #999;
}

.dialog-title span {
  margin-bottom: 2px;
}

.dialog-title svg {
  width: 13px;
  height: 13px;
}

.dialog-body {
  padding: 10px 10px 0 9px;
}

.dialog-tabs {
  height: 31px;
  margin: 0 0 -1px 2px;
  display: flex;
  align-items: flex-end;
  position: relative;
  z-index: 1;
}

.dtab {
  height: 27px;
  line-height: 26px;
  box-sizing: border-box;
  background-color: #f0f0f0;
  border: 1px solid #d9d9d9;
  border-bottom: none;
}

.dtab-general {
  width: 57px;
  padding-left: 8px;
}

.dtab-active {
  width: 66px;
  height: 31px;
  line-height: 29px;
  padding-left: 11px;
  background-color: #fff;
}

.dtab-search {
  width: 55px;
  padding-left: 5px;
}

.dialog-panel {
  width: 549px;
  height: 460px;
  box-sizing: border-box;
  padding: 13px 0 0 27px;
  background-color: #fff;
  border: 1px solid #d9d9d9;
}

.folder-views {
  width: 495px;
  height: 138px;
  box-sizing: border-box;
  margin: 0;
  padding: 0;
  display: flex;
  border: 1px solid #dcdcdc;
}

.folder-views legend {
  margin-left: 4px;
  padding: 0 4px;
  line-height: 24px;
}

.fv-icon {
  margin: 17px 0 0 28px;
}

.fv-right {
  margin: -1px 0 0 44px;
}

.fv-text {
  width: 375px;
  margin: 0;
  font-family: "Noto Sans CJK SC", sans-serif;
  line-height: 21px;
}

.fv-buttons {
  display: flex;
  gap: 25px;
  margin: 13px 0 0 1px;
}

.btn {
  width: 171px;
  height: 36px;
  padding: 0;
  font: inherit;
  color: #1a1a1a;
  background-color: #e1e1e1;
  border: 1px solid #adadad;
  border-radius: 0;
}

.btn-off {
  color: #838383;
  background-color: #cccccc;
}

.advanced-label {
  margin-top: 25px;
  line-height: 22px;
}

.advanced-list {
  width: 495px;
  height: 240px;
  box-sizing: border-box;
  margin-top: 3px;
  display: flex;
  border: 1px solid #828790;
}

.settings {
  flex: 1;
  padding-top: 2px;
}

.setting {
  height: 22px;
  display: flex;
  align-items: center;
  padding-left: 23px;
  white-space: nowrap;
}

.box {
  width: 16px;
  height: 16px;
  box-sizing: border-box;
  margin-right: 5px;
  border: 1px solid #333;
}

.box svg {
  width: 14px;
  height: 14px;
}

.setting-folder {
  width: 13px;
  height: 17px;
  margin: 0 6px 0 2px;
}

.setting-radio {
  padding-left: 42px;
}

.radio {
  width: 15px;
  height: 15px;
  box-sizing: border-box;
  margin-right: 6px;
  border: 1px solid #333;
  border-radius: 50%;
  background: radial-gradient(circle, #333 0 4.5px, #fff 5px);
}

.list-scroll {
  width: 20px;
  margin: 1px 1px 0 0;
}

.list-scroll-track {
  height: 75px;
}

.list-scroll-thumb {
  width: 19px;
  height: 107px;
}

.watermark {
  position: absolute;
  right: 9px;
  bottom: 8px;
  font-family: "Liberation Sans", Arial, sans-serif;
  font-size: 15.9px;
  line-height: 20px;
  color: rgba(190, 190, 190, 0.55);
  white-space: nowrap;
}
```
